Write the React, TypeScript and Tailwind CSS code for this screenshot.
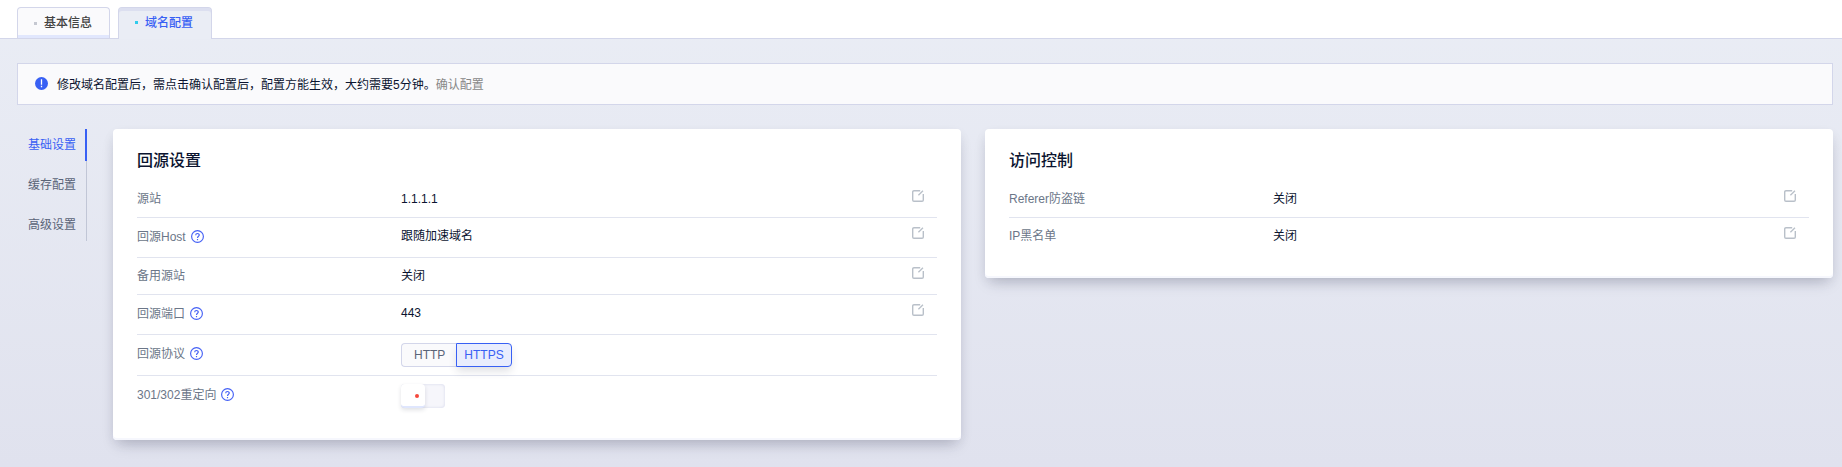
import React from "react";

const FONT = "font-['Liberation_Sans','Noto_Sans_CJK_SC',sans-serif]";

function HelpIcon() {
  return (
    <svg className="-mt-px ml-[5px] h-[13px] w-[13px] shrink-0" viewBox="0 0 13 13" fill="none" stroke="#4561f5">
      <circle cx="6.5" cy="6.5" r="5.9" strokeWidth="1.15" />
      <path d="M4.7 5.2C4.7 3 8.3 3 8.3 5.1C8.3 6.3 6.5 6.3 6.5 8" strokeWidth="1.15" />
      <path d="M6.5 9v1.2" strokeWidth="1.2" />
    </svg>
  );
}

function EditIcon() {
  return (
    <svg className="h-3 w-3" viewBox="0 0 12 12" fill="none" stroke="#b9c0c9">
      <path d="M8.2 .7H2Q.7 .7 .7 2V10Q.7 11.3 2 11.3H10Q11.3 11.3 11.3 10V4" strokeWidth="1.4" />
      <path d="M6.4 5.2L11 .8" strokeWidth="1.3" />
    </svg>
  );
}

type RowProps = {
  label: string;
  help?: boolean;
  edit?: boolean;
  height: string;
  labelPad: string;
  valuePad: string;
  editPad?: string;
  last?: boolean;
  children: React.ReactNode;
};

function Row({ label, help, edit, height, labelPad, valuePad, editPad = "pt-[9px]", last, children }: RowProps) {
  return (
    <div className={`flex items-start ${height} ${last ? "" : "border-b border-[#e1e4ef]"}`}>
      <div className={`flex w-[264px] items-center leading-4 text-[#6b7688] ${labelPad}`}>
        {label}
        {help && <HelpIcon />}
      </div>
      <div className={`flex-1 leading-4 text-[#0b1430] ${valuePad}`}>{children}</div>
      {edit && (
        <div className={`pr-[13px] ${editPad}`}>
          <EditIcon />
        </div>
      )}
    </div>
  );
}

function Card({ title, height, children }: { title: string; height: string; children: React.ReactNode }) {
  return (
    <section
      className={`w-[848px] rounded bg-white px-6 pt-5 shadow-[inset_0_-2px_0_#f6f7fd,0_8px_14px_-5px_rgba(36,40,65,0.26),0_4px_12px_rgba(36,40,65,0.05)] ${height}`}
    >
      <h2 className="mb-2 h-[23px] text-base leading-[23px] font-medium text-[#0b1430]">{title}</h2>
      {children}
    </section>
  );
}

function Protocol() {
  return (
    <div className="flex h-6 w-[111px] text-xs leading-[22px]">
      <button className="w-[55px] rounded-l-sm border border-r-0 border-[#d3d6ea] bg-[#fafafc] pl-[12px] text-left text-[#5a6478]">
        HTTP
      </button>
      <button className="w-14 rounded-r-sm border border-[#3860f4] bg-[#e9edfd] text-center text-[#3860f4] shadow-[0_5px_8px_-1px_rgba(36,40,65,0.15)]">
        HTTPS
      </button>
    </div>
  );
}

function Toggle() {
  return (
    <div className="h-6 w-11 rounded-sm bg-[#f6f6fb] shadow-[inset_0_0_3px_#d3d6ea]">
      <div className="flex h-6 w-6 items-center justify-end rounded-sm border-b-2 border-[#dfe6fd] bg-white pr-[6px] shadow-[0_2px_4px_rgba(36,40,65,0.14)]">
        <span className="mt-0.5 h-1 w-1 rounded-full bg-[#f5483b]" />
      </div>
    </div>
  );
}

export default function App() {
  return (
    <div
      className={`flex h-[467px] w-[1842px] flex-col overflow-hidden bg-linear-to-b from-[#eaedf5] to-[#e0e2ee] text-xs ${FONT}`}
    >
      <header className="flex h-[39px] items-end gap-2 border-b border-[#d3d6ea] bg-white pl-[17px]">
        <div className="flex h-[31px] w-[93px] items-center rounded-t-sm border border-b-0 border-[#d3d6ea] bg-[#fafafc] pl-4 text-[#434343] shadow-[inset_0_-3px_0_#e1e7fd]">
          <span className="mr-[7px] h-[3px] w-[3px] bg-[#c5c8d1]" />
          <span className="font-medium">基本信息</span>
        </div>
        <div className="-mb-px flex h-8 w-[94px] items-center rounded-t-sm border border-b-0 border-[#d3d6ea] bg-[#eaedf5] pb-0.5 pl-4 text-[#3860f4] shadow-[inset_0_3px_0_#dcdff0]">
          <span className="mr-[7px] h-[3px] w-[3px] bg-[#2fcbec]" />
          <span className="font-medium">域名配置</span>
        </div>
      </header>

      <div className="mt-6 ml-[17px] flex h-[42px] w-[1816px] items-center border border-[#d3d6ea] bg-[#fafafc] pl-[17px] text-[#0b1430]">
        <svg className="mr-[9px] h-[13px] w-[13px] -translate-y-px" viewBox="0 0 13 13">
          <circle cx="6.5" cy="6.5" r="6.5" fill="#3860f4" />
          <path d="M6.5 2.3v5.4M6.5 8.8v1.4" stroke="#fff" strokeWidth="1.3" />
        </svg>
        <span className="pt-px">修改域名配置后，需点击确认配置后，配置方能生效，大约需要5分钟。</span>
        <span className="pt-px text-[#888]">确认配置</span>
      </div>

      <main className="mt-6 flex items-start">
        <nav className="mr-[26px] ml-7 flex w-[59px] flex-col leading-8 text-[#5a6478]">
          <div className="h-8 border-r-2 border-[#3860f4] text-[#3860f4]">基础设置</div>
          <div className="h-10 border-r border-[#c1c6d6] pt-2">缓存配置</div>
          <div className="h-10 border-r border-[#c1c6d6] pt-2">高级设置</div>
        </nav>
        <div className="flex items-start gap-6">
          <Card title="回源设置" height="h-[311px]">
            <Row label="源站" edit height="h-[38px]" labelPad="pt-[11px]" valuePad="pt-[11px]" editPad="pt-[10px]">
              1.1.1.1
            </Row>
            <Row label="回源Host" help edit height="h-10" labelPad="pt-[11px]" valuePad="pt-[10px]">
              跟随加速域名
            </Row>
            <Row label="备用源站" edit height="h-[37px]" labelPad="pt-[10px]" valuePad="pt-[10px]">
              关闭
            </Row>
            <Row label="回源端口" help edit height="h-10" labelPad="pt-[11px]" valuePad="pt-[10px]">
              443
            </Row>
            <Row label="回源协议" help height="h-[41px]" labelPad="pt-[11px]" valuePad="pt-2">
              <Protocol />
            </Row>
            <Row label="301/302重定向" help last height="h-10" labelPad="pt-[11px]" valuePad="pt-2">
              <Toggle />
            </Row>
          </Card>
          <Card title="访问控制" height="h-[149px]">
            <Row label="Referer防盗链" edit height="h-[38px]" labelPad="pt-[11px]" valuePad="pt-[11px]" editPad="pt-[10px]">
              关闭
            </Row>
            <Row label="IP黑名单" edit last height="h-10" labelPad="pt-[10px]" valuePad="pt-[10px]">
              关闭
            </Row>
          </Card>
        </div>
      </main>
    </div>
  );
}
